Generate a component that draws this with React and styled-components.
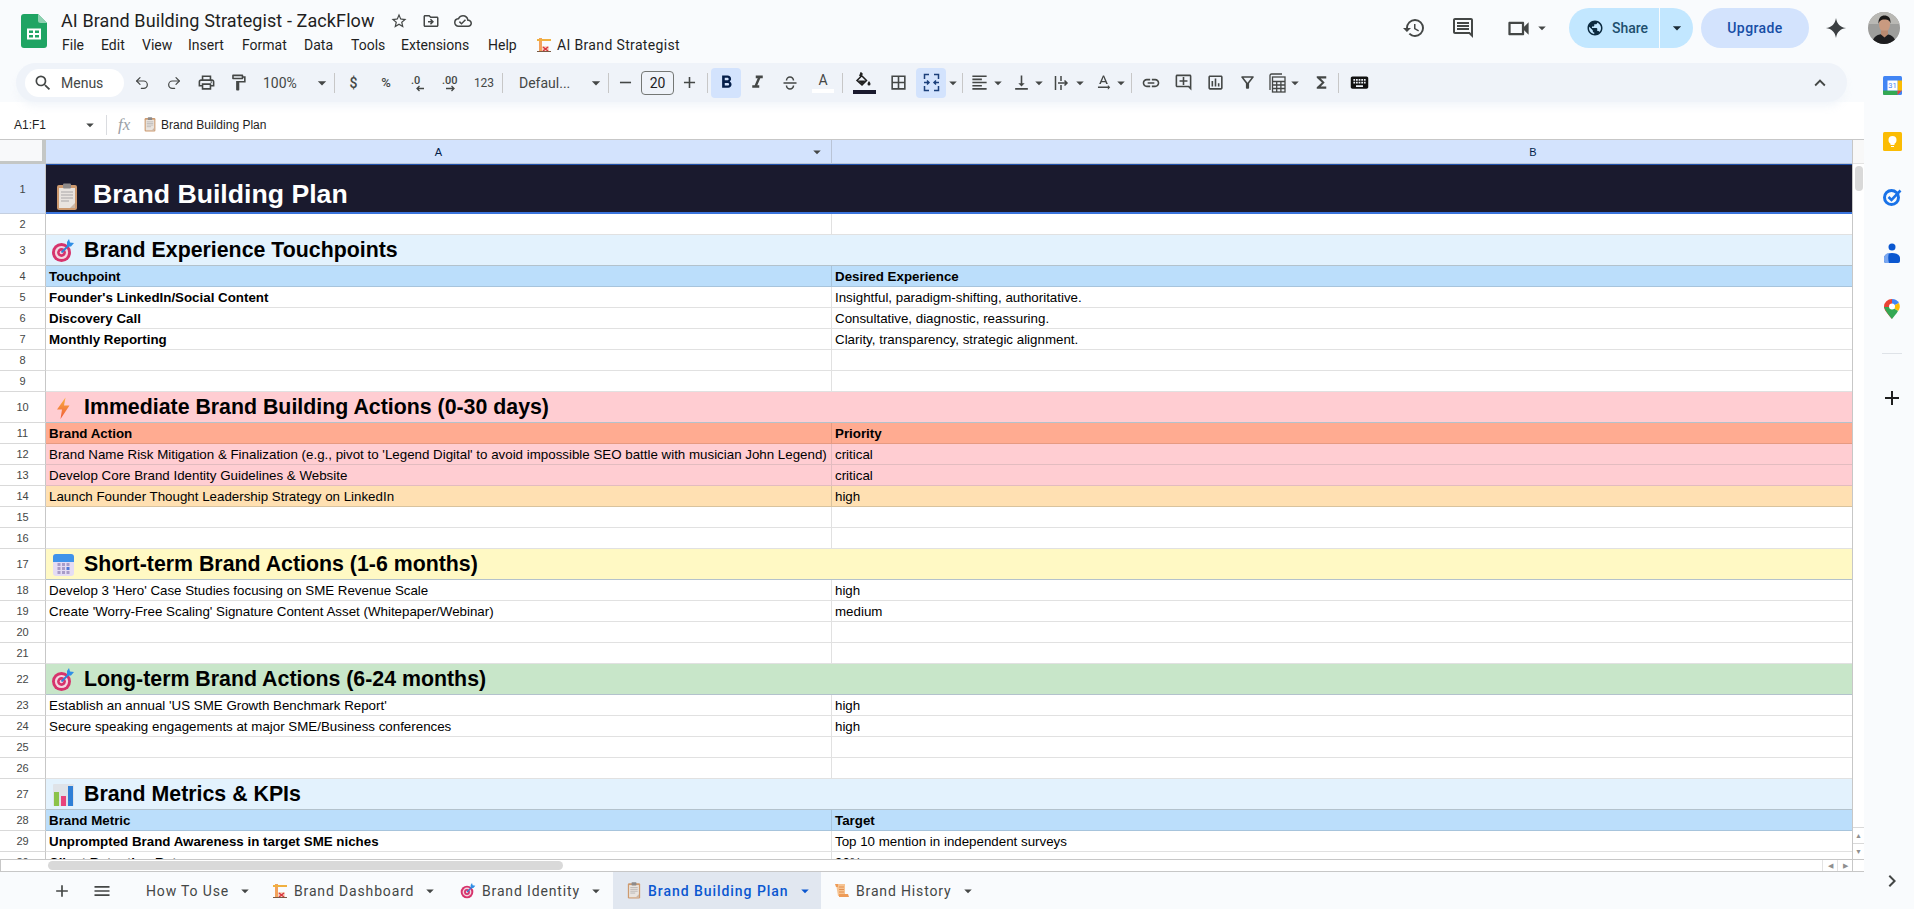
import React from "react";
import styled, { createGlobalStyle } from "styled-components";
import { Redo2, Undo2 } from "lucide-react";
import {
  MdAdd,
  MdArrowDropDown,
  MdChevronRight,
  MdFormatAlignLeft,
  MdFormatBold,
  MdFormatItalic,
  MdFunctions,
  MdHistory,
  MdKeyboard,
  MdKeyboardArrowUp,
  MdLink,
  MdMenu,
  MdOutlineAddComment,
  MdOutlineBorderAll,
  MdOutlineCloudDone,
  MdOutlineComment,
  MdOutlineDriveFileMove,
  MdOutlineFilterAlt,
  MdOutlineFormatPaint,
  MdOutlineInsertChart,
  MdOutlineLocalPrintshop,
  MdOutlineStarBorder,
  MdOutlineVideocam,
  MdPublic,
  MdRemove,
  MdSearch,
  MdTextRotationNone,
  MdVerticalAlignBottom,
} from "react-icons/md";

const GlobalStyle = createGlobalStyle`
  html, body {
    margin: 0;
    padding: 0;
    height: 100%;
    overflow: hidden;
    background: #f9fbfd;
  }
  * {
    box-sizing: border-box;
  }
`;

const UI_FONT = `"Open Sans", Roboto, "Liberation Sans", sans-serif`;
const CELL_FONT = `"Liberation Sans", Arial, sans-serif`;

const Page = styled.div`
  width: 1914px;
  height: 909px;
  display: flex;
  flex-direction: column;
  background: #f9fbfd;
  color: #1f1f1f;
  font-family: ${UI_FONT};
  overflow: hidden;
`;

/* ---------- top bar ---------- */

const TopBar = styled.header`
  height: 63px;
  flex: none;
  display: flex;
  align-items: flex-start;
  padding-left: 21px;
`;

const LogoSlot = styled.div`
  width: 26px;
  height: 34px;
  margin-top: 14px;
  margin-right: 14px;
`;

const TitleBlock = styled.div`
  display: flex;
  flex-direction: column;
  padding-top: 9px;
`;

const TitleRow = styled.div`
  display: flex;
  align-items: center;
  height: 24px;
`;

const DocTitle = styled.div`
  font-family: Roboto, sans-serif;
  font-size: 18px;
  line-height: 24px;
  color: #1f1f1f;
  width: 322px;
  white-space: nowrap;
  letter-spacing: 0.1px;
`;

const TitleIcon = styled.span`
  width: 32px;
  display: flex;
  justify-content: center;
  color: #444746;
  font-size: 18px;
`;

const MenuRow = styled.nav`
  display: flex;
  align-items: center;
  height: 24px;
  margin-left: 1px;
`;

const MenuItem = styled.span`
  font-family: Roboto, sans-serif;
  font-size: 14px;
  color: #1f1f1f;
  width: ${(p) => p.$w}px;
  white-space: nowrap;
`;

const AddonName = styled.span`
  font-family: Roboto, sans-serif;
  font-size: 14px;
  letter-spacing: 0.35px;
  color: #1f1f1f;
  margin-left: 5px;
  white-space: nowrap;
`;

const TopRight = styled.div`
  margin-left: auto;
  display: flex;
  align-items: center;
  height: 56px;
  padding-right: 14px;
`;

const TopIcon = styled.span`
  width: ${(p) => p.$w}px;
  margin-left: ${(p) => p.$ml || 0}px;
  flex: none;
  display: flex;
  align-items: center;
  justify-content: center;
  color: #444746;
  font-size: ${(p) => p.$size || 24}px;
`;

const SharePill = styled.div`
  display: flex;
  height: 40px;
  border-radius: 20px;
  overflow: hidden;
  background: #c2e7ff;
  margin-left: 18px;
`;

const ShareMain = styled.div`
  width: 91px;
  padding-left: 17px;
  display: flex;
  align-items: center;
  gap: 8px;
  font-size: 14px;
  font-weight: 500;
  font-family: Roboto, sans-serif;
  color: #1d4f6e;
  border-right: 1px solid #f9fbfd;

  svg {
    color: #0c2b40;
    font-size: 18px;
  }
`;

const ShareCaret = styled.div`
  width: 33px;
  display: flex;
  align-items: center;
  justify-content: center;
  color: #1b2b36;
  font-size: 20px;
`;

const UpgradePill = styled.div`
  width: 108px;
  height: 40px;
  margin-left: 8px;
  border-radius: 20px;
  background: #d3e3fd;
  color: #174ea6;
  display: flex;
  align-items: center;
  justify-content: center;
  font-family: Roboto, sans-serif;
  font-size: 14px;
  font-weight: 500;
  letter-spacing: 0.4px;
`;

const GeminiSlot = styled.span`
  width: 59px;
  padding-right: 5px;
  display: flex;
  justify-content: center;
`;

const AvatarSlot = styled.span`
  width: 32px;
  height: 32px;
  border-radius: 50%;
  overflow: hidden;
  display: block;
`;

/* ---------- main area ---------- */

const Body = styled.div`
  flex: 1;
  min-height: 0;
  display: flex;
`;

const Workspace = styled.div`
  width: 1864px;
  display: flex;
  flex-direction: column;
  min-height: 0;
`;

const SidePanel = styled.aside`
  width: 50px;
  display: flex;
  flex-direction: column;
  align-items: center;
  padding: 10px 0 16px 6px;
  background: #f9fbfd;
`;

const SideIcon = styled.span`
  width: 24px;
  height: 24px;
  margin-bottom: 32px;
  display: flex;
  align-items: center;
  justify-content: center;
`;

const SideRule = styled.div`
  width: 20px;
  height: 1px;
  background: #dfe3e8;
  margin: 0 0 32px;
`;

const SidePlus = styled.span`
  font-size: 24px;
  color: #1f1f1f;
  display: flex;
`;

const SideChevron = styled.span`
  margin-top: auto;
  font-size: 24px;
  color: #444746;
  display: flex;
`;

/* ---------- toolbar ---------- */

const ToolbarOuter = styled.div`
  position: relative;
  z-index: 1;
  height: 39px;
  flex: none;
  margin: 0 17px 0 16px;
  padding-left: 9px;
  padding-right: 11px;
  display: flex;
  align-items: center;
  border-radius: 20px;
  background: #eff3f9;
  box-shadow: 0 6px 8px -2px rgba(240, 244, 249, 0.9);
`;

const SearchPill = styled.div`
  width: 99px;
  height: 28px;
  border-radius: 14px;
  background: #fff;
  display: flex;
  align-items: center;
  padding-left: 8px;
  gap: 8px;
  margin-right: 2px;
  color: #444746;
  font-family: Roboto, sans-serif;
  font-size: 14px;

  svg {
    font-size: 20px;
    flex: none;
  }
`;

const ToolButton = styled.span`
  width: ${(p) => p.$w || 32}px;
  height: 30px;
  margin-left: ${(p) => p.$ml || 0}px;
  flex: none;
  display: flex;
  align-items: center;
  justify-content: center;
  border-radius: 4px;
  background: ${(p) => (p.$active ? "#d3e3fd" : "transparent")};
  color: ${(p) => p.$color || (p.$active ? "#041e49" : "#444746")};
  font-size: ${(p) => p.$size || 19}px;
  font-family: Roboto, sans-serif;
`;

const ToolText = styled.span`
  font-size: ${(p) => p.$size || 13}px;
  font-weight: ${(p) => p.$weight || 400};
  color: #444746;
`;

const Caret = styled.span`
  width: ${(p) => p.$w || 8}px;
  flex: none;
  display: flex;
  justify-content: center;
  color: #444746;
  font-size: 18px;

  svg {
    flex: none;
  }
`;

const Sep = styled.span`
  width: 1px;
  height: 20px;
  flex: none;
  background: #c7c7c7;
  margin: 0 2px 0 ${(p) => p.$ml || 2}px;
`;

const ToolSelect = styled.span`
  width: ${(p) => p.$w}px;
  padding-left: ${(p) => p.$pad}px;
  flex: none;
  display: flex;
  align-items: center;
  justify-content: space-between;
  font-family: Roboto, sans-serif;
  font-size: 14px;
  color: #444746;

  svg {
    font-size: 20px;
  }
`;

const SizeBox = styled.span`
  width: 33px;
  height: 24px;
  margin-left: 2px;
  flex: none;
  border: 1px solid #747775;
  border-radius: 4px;
  display: flex;
  align-items: center;
  justify-content: center;
  font-family: Roboto, sans-serif;
  font-size: 14px;
  color: #1f1f1f;
`;

const ColorGlyph = styled.span`
  display: flex;
  flex-direction: column;
  align-items: center;
  font-size: 14px;
  line-height: 14px;
  color: #444746;
`;

const ColorBar = styled.span`
  width: ${(p) => p.$w}px;
  height: 4px;
  background: ${(p) => p.$color};
  margin-top: 2px;
`;

const ToolbarEnd = styled(ToolButton)`
  margin-left: auto;
`;

/* ---------- formula bar ---------- */

const FormulaBar = styled.div`
  height: 37px;
  flex: none;
  padding-top: 9px;
  display: flex;
  align-items: center;
  background: #fff;
  font-family: ${CELL_FONT};
  font-size: 12px;
  color: #1f1f1f;
`;

const NameBox = styled.div`
  width: 106px;
  padding: 0 7px 0 14px;
  display: flex;
  align-items: center;
  justify-content: space-between;

  svg {
    font-size: 18px;
    color: #444746;
  }
`;

const FormulaSep = styled.div`
  width: 1px;
  height: 20px;
  background: #dadce0;
`;

const FxMark = styled.span`
  font-family: "Liberation Serif", serif;
  font-style: italic;
  font-size: 17px;
  color: #9aa0a6;
  margin: 0 10px 0 11px;
  width: 15px;
`;

const FormulaValue = styled.span`
  display: flex;
  align-items: center;
  gap: 4px;
`;

/* ---------- grid ---------- */

const SheetArea = styled.div`
  flex: 1;
  min-height: 0;
  display: flex;
  background: #fff;
  border-top: 1px solid #c7c7c7;
`;

const SheetMain = styled.div`
  width: 1852px;
  display: flex;
  flex-direction: column;
  min-height: 0;
  overflow: hidden;
`;

const ColumnHeader = styled.div`
  display: flex;
  height: 24px;
  flex: none;
`;

const CornerCell = styled.div`
  width: 46px;
  flex: none;
  background: #f8f9fa;
  border-right: 4px solid #c4c7c5;
  border-bottom: 3px solid #c4c7c5;
`;

const ColumnCell = styled.div`
  position: relative;
  width: ${(p) => p.$w}px;
  flex: none;
  background: #d3e3fd;
  border-right: 1px solid #b9c4d6;
  border-bottom: 1px solid #b9c4d6;
  display: flex;
  align-items: center;
  justify-content: center;
  font-family: ${CELL_FONT};
  font-size: 11px;
  color: #041e49;
`;

const ColumnMenu = styled.span`
  position: absolute;
  right: 5px;
  top: 3px;
  font-size: 18px;
  color: #444746;
  display: flex;
`;

const GridViewport = styled.div`
  flex: 1;
  min-height: 0;
  overflow: hidden;
`;

const Row = styled.div`
  display: flex;
  height: ${(p) => p.$h}px;
`;

const RowNumber = styled.div`
  width: 46px;
  flex: none;
  display: flex;
  align-items: center;
  justify-content: center;
  background: ${(p) => (p.$selected ? "#d3e3fd" : "#fff")};
  border-right: 1px solid #c7c7c7;
  border-bottom: 1px solid ${(p) => (p.$selected ? "#c4cfe0" : "#d9d9d9")};
  font-family: ${CELL_FONT};
  font-size: 11px;
  color: #444746;
`;

const Cell = styled.div`
  width: ${(p) => p.$w}px;
  flex: none;
  padding: 0 3px;
  display: flex;
  align-items: flex-end;
  background: ${(p) => p.$bg || "#fff"};
  border-right: 1px solid ${(p) => p.$line || "#e1e1e1"};
  border-bottom: 1px solid ${(p) => p.$line || "#e1e1e1"};
  font-family: ${CELL_FONT};
  font-size: 13.33px;
  line-height: 18px;
  font-weight: ${(p) => (p.$bold ? 700 : 400)};
  color: #000;
  white-space: nowrap;
  overflow: hidden;
`;

const SectionCell = styled.div`
  flex: 1;
  display: flex;
  align-items: center;
  gap: 9px;
  padding: 1px 0 0 5px;
  background: ${(p) => p.$bg};
  border-bottom: 1px solid #b3c2cc;
  font-family: ${CELL_FONT};
  font-size: 21.33px;
  font-weight: 700;
  color: #000;
  white-space: nowrap;
`;

const TitleCell = styled.div`
  flex: 1;
  display: flex;
  align-items: flex-end;
  gap: 13px;
  padding: 0 0 1px 8px;
  background: #1a1a2e;
  border-top: 1px solid #1d4fa8;
  border-bottom: 2px solid #3a74dc;
  font-family: ${CELL_FONT};
  font-size: 26.67px;
  line-height: 34px;
  font-weight: 700;
  color: #fff;
  white-space: nowrap;
`;

const HScrollBar = styled.div`
  height: 13px;
  flex: none;
  display: flex;
  align-items: center;
  background: #fff;
  border-top: 1px solid #c7c7c7;
  border-bottom: 1px solid #c7c7c7;
  padding-left: 46px;
  box-shadow: inset 46px 0 0 -45px #c7c7c7;
`;

const HThumb = styled.div`
  width: 515px;
  height: 9px;
  margin-left: 2px;
  border-radius: 5px;
  background: #d9d9d9;
`;

const ScrollArrows = styled.div`
  margin-left: auto;
  display: flex;
  height: 100%;
`;

const ScrollArrow = styled.span`
  width: 15px;
  display: flex;
  align-items: center;
  justify-content: center;
  border-left: 1px solid #e3e3e3;
  color: #8f8f8f;
  font-size: 7px;
  line-height: 1;
`;

const VScroll = styled.div`
  width: 12px;
  flex: none;
  display: flex;
  flex-direction: column;
  background: #fff;
  border-left: 1px solid #c7c7c7;
`;

const VScrollHead = styled.div`
  height: 24px;
  flex: none;
  background: #f8f8f8;
  border-bottom: 1px solid #e3e3e3;
`;

const VThumbTrack = styled.div`
  flex: 1;
  padding: 2px 1px 0 2px;
`;

const VThumb = styled.div`
  height: 25px;
  border-radius: 4px;
  background: #d9d9d9;
`;

const VArrow = styled.span`
  height: 16px;
  flex: none;
  display: flex;
  align-items: center;
  justify-content: center;
  border-top: 1px solid #d9d9d9;
  color: #8f8f8f;
  font-size: 7px;
  line-height: 1;
`;

const VFoot = styled.div`
  height: 13px;
  flex: none;
  border-top: 1px solid #c7c7c7;
  border-bottom: 1px solid #c7c7c7;
`;

/* ---------- sheet tabs ---------- */

const TabBar = styled.div`
  height: 37px;
  flex: none;
  display: flex;
  align-items: stretch;
  padding-left: 42px;
  background: #f9fbfd;
  font-family: Roboto, sans-serif;
  font-size: 14px;
  color: #444746;
`;

const TabTool = styled.span`
  width: 40px;
  display: flex;
  align-items: center;
  justify-content: center;
  font-size: 20px;
  color: #444746;
`;

const SheetTab = styled.div`
  width: ${(p) => p.$w}px;
  padding-left: ${(p) => p.$pad}px;
  display: flex;
  align-items: center;
  gap: 6px;
  background: ${(p) => (p.$active ? "#e1e7f0" : "transparent")};
  color: ${(p) => (p.$active ? "#0b57d0" : "#444746")};
  font-weight: ${(p) => (p.$active ? 500 : 400)};
  letter-spacing: ${(p) => (p.$active ? 0.95 : 0.85)}px;
  white-space: nowrap;

  svg {
    flex: none;
  }

  svg.caret {
    font-size: 18px;
    margin-left: 1px;
    color: ${(p) => (p.$active ? "#0b57d0" : "#444746")};
  }
`;

/* ---------- drawings ---------- */

const SheetsLogo = () => (
  <svg width="26" height="34" viewBox="0 0 26 34">
    <path d="M3 0h14l9 9v22a3 3 0 0 1-3 3H3a3 3 0 0 1-3-3V3a3 3 0 0 1 3-3z" fill="#1fa463" />
    <path d="M17 0l9 9h-6.5A2.5 2.5 0 0 1 17 6.5z" fill="#8ed1b1" />
    <path d="M6 14.5h14v11H6z" fill="#fff" />
    <path d="M8 16.5h4v2.5H8zM14 16.5h4v2.5h-4zM8 21h4v2.5H8zM14 21h4v2.5h-4z" fill="#1fa463" />
  </svg>
);

const ClipboardGlyph = ({ size = 26 }) => (
  <svg width={size} height={(size * 28) / 26} viewBox="0 0 26 28">
    <rect x="3" y="2" width="20" height="25" rx="2" fill="#cd9a6f" />
    <rect x="5" y="5" width="16" height="20" fill="#e9e4df" />
    <path d="M21 25v-5l-5 5z" fill="#c9b7a8" />
    <rect x="9" y="0.5" width="8" height="5" rx="1" fill="#8d8a8a" />
    <path d="M7 9h12M7 12h12M7 15h12M7 18h8" stroke="#a9a6a8" strokeWidth="1.1" />
  </svg>
);

const TargetGlyph = ({ size = 24 }) => (
  <svg width={size} height={size} viewBox="0 0 24 24">
    <circle cx="10.5" cy="13.5" r="9.5" fill="#d6336c" />
    <circle cx="10.5" cy="13.5" r="6.6" fill="#f3d6e0" />
    <circle cx="10.5" cy="13.5" r="4.4" fill="#d6336c" />
    <circle cx="10.5" cy="13.5" r="1.8" fill="#f3d6e0" />
    <path d="M10.5 13.5L19 5" stroke="#2f7fd6" strokeWidth="1.8" />
    <path d="M16 3l2-3 1 3.5L23 4l-3 3.5-4 .2z" fill="#2f8fe6" />
  </svg>
);

const ZapGlyph = ({ size = 24 }) => (
  <svg width={size} height={size} viewBox="0 0 24 24">
    <defs>
      <linearGradient id="zapFill" x1="0" y1="0" x2="0" y2="1">
        <stop offset="0" stopColor="#f9b13c" />
        <stop offset="1" stopColor="#ef5a3c" />
      </linearGradient>
    </defs>
    <path d="M14.5 1.5L6 13.5h5L9.5 23l9-13.5h-5.5z" fill="url(#zapFill)" />
  </svg>
);

const CalendarGlyph = ({ size = 24 }) => (
  <svg width={size} height={size} viewBox="0 0 24 24">
    <rect x="2" y="1" width="21" height="22" rx="3" fill="#e4dcf4" />
    <path d="M2 9V4a3 3 0 0 1 3-3h15a3 3 0 0 1 3 3v5z" fill="#3f93ea" />
    {[10, 14, 18].flatMap((y) =>
      [6.5, 11, 15.5].map((x) => (
        <rect
          key={`${x}-${y}`}
          x={x}
          y={y}
          width="3"
          height="3"
          fill={x === 15.5 && y === 14 ? "#4f79d8" : "#a89cc8"}
        />
      ))
    )}
  </svg>
);

const ChartGlyph = ({ size = 24 }) => (
  <svg width={size} height={size} viewBox="0 0 24 24">
    <rect x="2" y="1" width="21" height="22" rx="1" fill="#dfe3e8" />
    <rect x="3" y="9" width="5" height="14" fill="#8bc34a" />
    <rect x="10" y="13" width="5" height="10" fill="#e8437b" />
    <rect x="17" y="3" width="5" height="20" fill="#2f7fd6" />
  </svg>
);

const ScrollGlyph = ({ size = 16 }) => (
  <svg width={size} height={size} viewBox="0 0 16 16">
    <path d="M2 1h9v12H4z" fill="#f6c391" />
    <path d="M1 1h3v3H2zM5 14h10l-1-3H5z" fill="#ee9b57" />
    <path d="M5 4h5M5 6.5h5M5 9h5" stroke="#e08a4a" strokeWidth="0.9" />
  </svg>
);

const CraneGlyph = ({ size = 16 }) => (
  <svg width={size} height={size} viewBox="0 0 16 16">
    <path d="M3 1h3v14H3z" fill="#f2a25c" />
    <path d="M1 2h14v2H1z" fill="#f0b040" />
    <path d="M6 9h7v6H6z" fill="#f7d9c6" />
    <path d="M7 10l5 4M12 10l-5 4" stroke="#d9363e" strokeWidth="1.6" />
    <path d="M1 14.5h14" stroke="#7a5a44" strokeWidth="1" />
  </svg>
);

const GeminiSpark = () => (
  <svg width="22" height="22" viewBox="0 0 24 24">
    <path d="M12 1c1 6.5 4.5 10 11 11-6.5 1-10 4.5-11 11-1-6.5-4.5-10-11-11 6.5-1 10-4.5 11-11z" fill="#3c4043" />
  </svg>
);

const AvatarArt = () => (
  <svg width="32" height="32" viewBox="0 0 32 32">
    <rect width="32" height="32" fill="#9d9d9b" />
    <rect width="32" height="12" fill="#b9b8b4" />
    <path d="M4 32c1-8 6-10 12-10s11 2 12 10z" fill="#1d1d1f" />
    <path d="M11 12c0-5 2.5-7 5.5-7S22 7 22 12c0 4.5-2.5 8-5.5 8S11 16.5 11 12z" fill="#c99a80" />
    <path d="M10.5 12c-.5-6 2.5-8.5 6-8.5s6.5 2 6 8c-1-3-2-4-6-4s-5 1.5-6 4.5z" fill="#1c1a19" />
    <path d="M13 22.5l3.5 3 3.5-3v-4h-7z" fill="#b98a70" />
  </svg>
);

const CalendarApp = () => (
  <svg width="19" height="19" viewBox="0 0 19 19">
    <rect width="19" height="19" rx="1.5" fill="#4285f4" />
    <path d="M0 14.5h14.5V19H1.5A1.5 1.5 0 0 1 0 17.5z" fill="#34a853" />
    <path d="M14.5 14.5H19L14.5 19z" fill="#ea4335" />
    <path d="M14.5 4.5H19v10h-4.5z" fill="#fbbc04" />
    <path d="M4.5 4.5h10v10h-10z" fill="#fff" />
    <text x="9.5" y="12.3" textAnchor="middle" fontSize="7.5" fontFamily="Roboto, sans-serif" fill="#4285f4">31</text>
  </svg>
);

const KeepApp = () => (
  <svg width="19" height="19" viewBox="0 0 19 19">
    <rect width="19" height="19" rx="1.5" fill="#fbbc04" />
    <circle cx="9.5" cy="8" r="4" fill="#fff" />
    <path d="M7.5 11h4v2h-4zM8 14h3v1H8z" fill="#fff" />
  </svg>
);

const TasksApp = () => (
  <svg width="20" height="20" viewBox="0 0 20 20">
    <circle cx="9.5" cy="10.5" r="7" fill="none" stroke="#1a73e8" strokeWidth="3" />
    <path d="M6.5 10l3 3 9-9.5" fill="none" stroke="#1a73e8" strokeWidth="2.6" />
  </svg>
);

const ContactsApp = () => (
  <svg width="16" height="20" viewBox="0 0 16 20">
    <circle cx="8" cy="4" r="3.5" fill="#0b57d0" />
    <path d="M0 18v-3c0-3 3.5-5 8-5s8 2 8 5v3a2 2 0 0 1-2 2H2a2 2 0 0 1-2-2z" fill="#0b57d0" />
    <path d="M0 14.5C.5 12 3 10 5 10c-1 3-1 7 0 10H2a2 2 0 0 1-2-2z" fill="#7aa7f0" />
  </svg>
);

const MapsApp = () => (
  <svg width="16" height="20" viewBox="0 0 16 20">
    <path d="M8 20C3 14 0 11 0 7.5A8 7.5 0 0 1 8 0z" fill="#ea4335" />
    <path d="M8 0a8 7.5 0 0 1 7 4l-7 3.5z" fill="#4285f4" />
    <path d="M15 4c1.3 3 1 5.5-1 8L8 7.5z" fill="#fbbc04" />
    <path d="M0 8l8 0 6 4c-1.5 2.5-3.5 5-6 8-3.5-4-6.5-8-8-12z" fill="#34a853" />
    <circle cx="8" cy="7.5" r="3" fill="#fff" />
  </svg>
);

const DecimalDown = () => (
  <svg width="20" height="20" viewBox="0 0 20 20">
    <text x="3" y="11" fontSize="11" fontFamily="Roboto, sans-serif" fontWeight="500" fill="#444746">.0</text>
    <path d="M16 15.5H9M11.5 13l-2.5 2.5 2.5 2.5" fill="none" stroke="#444746" strokeWidth="1.3" />
  </svg>
);

const DecimalUp = () => (
  <svg width="22" height="20" viewBox="0 0 22 20">
    <text x="2" y="11" fontSize="11" fontFamily="Roboto, sans-serif" fontWeight="500" fill="#444746">.00</text>
    <path d="M6 15.5h8M11.5 13l2.5 2.5-2.5 2.5" fill="none" stroke="#444746" strokeWidth="1.3" />
  </svg>
);

const StrikeGlyph = () => (
  <svg width="18" height="18" viewBox="0 0 18 18" fill="none" stroke="#444746" strokeWidth="1.5">
    <path d="M5.5 6.5a3.5 3.5 0 0 1 7 0M2.500 9h13M5.500 11.500a3.500 3.500 0 0 0 7 0" />
  </svg>
);

const FillGlyph = () => (
  <ColorGlyph>
    <svg width="18" height="16" viewBox="0 0 18 16">
      <path d="M6 1l1 1-1 1 5.5 5.5L7 13 2 8.500 6 4.500 5 3.500z" fill="none" stroke="#1f1f1f" strokeWidth="1.5" />
      <path d="M3 8.5h8L7 12.500z" fill="#1f1f1f" />
      <path d="M14 9c1 1.500 1.500 2.300 1.500 3a1.500 1.500 0 0 1-3 0c0-.7.5-1.500 1.500-3z" fill="#1f1f1f" />
    </svg>
    <ColorBar $w={23} $color="#1a1a2e" />
  </ColorGlyph>
);

const MergeGlyph = () => (
  <svg width="17" height="19" viewBox="0 0 17 19" fill="none" stroke="#1b3f7a" strokeWidth="1.5">
    <path d="M6 1.5H1.5V6M11 1.5h4.5V6M6 17.5H1.5V13M11 17.5h4.5V13" />
    <path d="M1 9.5h5M4 7.5l2 2-2 2M16 9.5h-5M13 7.5l-2 2 2 2" />
  </svg>
);

const WrapGlyph = () => (
  <svg width="18" height="18" viewBox="0 0 18 18" fill="none" stroke="#444746" strokeWidth="1.5">
    <path d="M2.5 2v14M8 2v5M8 11v5M5 9h9M11.5 6.5L14 9l-2.500 2.500" />
  </svg>
);

const TableStackGlyph = () => (
  <svg width="17" height="20" viewBox="0 0 17 20" fill="none" stroke="#444746" strokeWidth="1.3">
    <path d="M1 17V2.5A1.5 1.5 0 0 1 2.5 1H13" />
    <rect x="3.5" y="4" width="12.5" height="15" />
    <path d="M3.5 8.5H16M3.5 12H16M3.5 15.5H16M7.7 8.5V19M11.9 8.5V19" />
  </svg>
);

/* ---------- data ---------- */

const rows = [
  { n: 1, type: "title", text: "Brand Building Plan" },
  { n: 2 },
  { n: 3, type: "section", text: "Brand Experience Touchpoints", bg: "#e3f2fd", icon: "target" },
  { n: 4, a: "Touchpoint", b: "Desired Experience", bg: "#bbdefb", head: true, line: "#a7c4dc" },
  { n: 5, a: "Founder's LinkedIn/Social Content", b: "Insightful, paradigm-shifting, authoritative.", boldA: true },
  { n: 6, a: "Discovery Call", b: "Consultative, diagnostic, reassuring.", boldA: true },
  { n: 7, a: "Monthly Reporting", b: "Clarity, transparency, strategic alignment.", boldA: true },
  { n: 8 },
  { n: 9 },
  { n: 10, type: "section", text: "Immediate Brand Building Actions (0-30 days)", bg: "#ffcdd2", icon: "zap" },
  { n: 11, a: "Brand Action", b: "Priority", bg: "#ffab91", head: true, line: "#e69a82" },
  {
    n: 12,
    a: "Brand Name Risk Mitigation & Finalization (e.g., pivot to 'Legend Digital' to avoid impossible SEO battle with musician John Legend)",
    b: "critical",
    bg: "#ffcdd2",
    line: "#e3bcc0",
  },
  { n: 13, a: "Develop Core Brand Identity Guidelines & Website", b: "critical", bg: "#ffcdd2", line: "#e3bcc0" },
  { n: 14, a: "Launch Founder Thought Leadership Strategy on LinkedIn", b: "high", bg: "#ffe0b2", line: "#d9c39e" },
  { n: 15 },
  { n: 16 },
  { n: 17, type: "section", text: "Short-term Brand Actions (1-6 months)", bg: "#fff9c4", icon: "calendar" },
  { n: 18, a: "Develop 3 'Hero' Case Studies focusing on SME Revenue Scale", b: "high" },
  { n: 19, a: "Create 'Worry-Free Scaling' Signature Content Asset (Whitepaper/Webinar)", b: "medium" },
  { n: 20 },
  { n: 21 },
  { n: 22, type: "section", text: "Long-term Brand Actions (6-24 months)", bg: "#c8e6c9", icon: "target" },
  { n: 23, a: "Establish an annual 'US SME Growth Benchmark Report'", b: "high" },
  { n: 24, a: "Secure speaking engagements at major SME/Business conferences", b: "high" },
  { n: 25 },
  { n: 26 },
  { n: 27, type: "section", text: "Brand Metrics & KPIs", bg: "#e3f2fd", icon: "chart" },
  { n: 28, a: "Brand Metric", b: "Target", bg: "#bbdefb", head: true, line: "#a7c4dc" },
  { n: 29, a: "Unprompted Brand Awareness in target SME niches", b: "Top 10 mention in independent surveys", boldA: true },
  { n: 30, a: "Client Retention Rate", b: "90%", boldA: true },
];

const sectionIcons = {
  target: <TargetGlyph />,
  zap: <ZapGlyph />,
  calendar: <CalendarGlyph />,
  chart: <ChartGlyph />,
};

const menus = [
  ["File", 39],
  ["Edit", 41],
  ["View", 46],
  ["Insert", 54],
  ["Format", 62],
  ["Data", 47],
  ["Tools", 50],
  ["Extensions", 87],
  ["Help", 48],
];

// column B runs on past the visible part of the sheet, its letter sits at its true centre
const COL_A = 786;
const COL_B = 1403;

const SheetRow = ({ row }) => {
  if (row.type === "title") {
    return (
      <Row $h={50}>
        <RowNumber $selected>{row.n}</RowNumber>
        <TitleCell>
          <ClipboardGlyph />
          {row.text}
        </TitleCell>
      </Row>
    );
  }
  if (row.type === "section") {
    return (
      <Row $h={31}>
        <RowNumber>{row.n}</RowNumber>
        <SectionCell $bg={row.bg}>
          {sectionIcons[row.icon]}
          {row.text}
        </SectionCell>
      </Row>
    );
  }
  return (
    <Row $h={21}>
      <RowNumber>{row.n}</RowNumber>
      <Cell $w={COL_A} $bg={row.bg} $bold={row.head || row.boldA} $line={row.line}>
        {row.a}
      </Cell>
      <Cell $w={COL_B} $bg={row.bg} $bold={row.head} $line={row.line}>
        {row.b}
      </Cell>
    </Row>
  );
};

const Toolbar = () => (
  <ToolbarOuter>
    <SearchPill>
      <MdSearch />
      Menus
    </SearchPill>
    <ToolButton><Undo2 size={16} strokeWidth={1.8} /></ToolButton>
    <ToolButton><Redo2 size={16} strokeWidth={1.8} /></ToolButton>
    <ToolButton><MdOutlineLocalPrintshop /></ToolButton>
    <ToolButton><MdOutlineFormatPaint /></ToolButton>
    <ToolSelect $w={78} $pad={9}>
      100%
      <MdArrowDropDown />
    </ToolSelect>
    <Sep />
    <ToolButton $w={33}><ToolText $size={14} $weight={500}>$</ToolText></ToolButton>
    <ToolButton><ToolText $size={13} $weight={500}>%</ToolText></ToolButton>
    <ToolButton><DecimalDown /></ToolButton>
    <ToolButton $w={34}><DecimalUp /></ToolButton>
    <ToolButton><ToolText $size={12}>123</ToolText></ToolButton>
    <Sep />
    <ToolSelect $w={101} $pad={14}>
      Defaul...
      <MdArrowDropDown />
    </ToolSelect>
    <Sep />
    <ToolButton $w={28}><MdRemove /></ToolButton>
    <SizeBox>20</SizeBox>
    <ToolButton $w={31}><MdAdd /></ToolButton>
    <Sep />
    <ToolButton $w={30} $ml={1} $active $size={21}><MdFormatBold /></ToolButton>
    <ToolButton $size={21}><MdFormatItalic /></ToolButton>
    <ToolButton $w={33}><StrikeGlyph /></ToolButton>
    <ToolButton $w={34}>
      <ColorGlyph>
        A
        <ColorBar $w={22} $color="#ffffff" />
      </ColorGlyph>
    </ToolButton>
    <Sep />
    <ToolButton $w={38}><FillGlyph /></ToolButton>
    <ToolButton $w={31}><MdOutlineBorderAll /></ToolButton>
    <ToolButton $w={30} $ml={2} $active><MergeGlyph /></ToolButton>
    <Caret $w={14}><MdArrowDropDown /></Caret>
    <Sep />
    <ToolButton $w={28}><MdFormatAlignLeft /></ToolButton>
    <Caret $w={10}><MdArrowDropDown /></Caret>
    <ToolButton $w={28} $ml={4}><MdVerticalAlignBottom /></ToolButton>
    <Caret><MdArrowDropDown /></Caret>
    <ToolButton $w={28} $ml={5}><WrapGlyph /></ToolButton>
    <Caret><MdArrowDropDown /></Caret>
    <ToolButton $w={28} $ml={5}><MdTextRotationNone /></ToolButton>
    <Caret><MdArrowDropDown /></Caret>
    <Sep $ml={6} />
    <ToolButton $ml={1} $size={20}><MdLink /></ToolButton>
    <ToolButton><MdOutlineAddComment /></ToolButton>
    <ToolButton><MdOutlineInsertChart /></ToolButton>
    <ToolButton><MdOutlineFilterAlt /></ToolButton>
    <ToolButton $w={28}><TableStackGlyph /></ToolButton>
    <Caret><MdArrowDropDown /></Caret>
    <ToolButton $ml={6}><MdFunctions /></ToolButton>
    <Sep $ml={1} />
    <ToolButton $ml={2} $color="#111" $size={21}><MdKeyboard /></ToolButton>
    <ToolbarEnd $size={22}><MdKeyboardArrowUp /></ToolbarEnd>
  </ToolbarOuter>
);

const App = () => (
  <Page>
    <GlobalStyle />
    <TopBar>
      <LogoSlot><SheetsLogo /></LogoSlot>
      <TitleBlock>
        <TitleRow>
          <DocTitle>AI Brand Building Strategist - ZackFlow</DocTitle>
          <TitleIcon><MdOutlineStarBorder /></TitleIcon>
          <TitleIcon><MdOutlineDriveFileMove /></TitleIcon>
          <TitleIcon><MdOutlineCloudDone /></TitleIcon>
        </TitleRow>
        <MenuRow>
          {menus.map(([label, w]) => (
            <MenuItem key={label} $w={w}>{label}</MenuItem>
          ))}
          <CraneGlyph />
          <AddonName>AI Brand Strategist</AddonName>
        </MenuRow>
      </TitleBlock>
      <TopRight>
        <TopIcon $w={32}><MdHistory /></TopIcon>
        <TopIcon $w={66}><MdOutlineComment /></TopIcon>
        <TopIcon $w={44} $size={27}><MdOutlineVideocam /></TopIcon>
        <TopIcon $w={18} $ml={-7}><MdArrowDropDown /></TopIcon>
        <SharePill>
          <ShareMain>
            <MdPublic />
            Share
          </ShareMain>
          <ShareCaret><MdArrowDropDown /></ShareCaret>
        </SharePill>
        <UpgradePill>Upgrade</UpgradePill>
        <GeminiSlot><GeminiSpark /></GeminiSlot>
        <AvatarSlot><AvatarArt /></AvatarSlot>
      </TopRight>
    </TopBar>
    <Body>
      <Workspace>
        <Toolbar />
        <FormulaBar>
          <NameBox>
            A1:F1
            <MdArrowDropDown />
          </NameBox>
          <FormulaSep />
          <FxMark>fx</FxMark>
          <FormulaValue>
            <ClipboardGlyph size={14} />
            <span>Brand Building Plan</span>
          </FormulaValue>
        </FormulaBar>
        <SheetArea>
          <SheetMain>
            <ColumnHeader>
              <CornerCell />
              <ColumnCell $w={COL_A}>
                A
                <ColumnMenu><MdArrowDropDown /></ColumnMenu>
              </ColumnCell>
              <ColumnCell $w={COL_B}>B</ColumnCell>
            </ColumnHeader>
            <GridViewport>
              {rows.map((row) => (
                <SheetRow key={row.n} row={row} />
              ))}
            </GridViewport>
            <HScrollBar>
              <HThumb />
              <ScrollArrows>
                <ScrollArrow>◀</ScrollArrow>
                <ScrollArrow>▶</ScrollArrow>
              </ScrollArrows>
            </HScrollBar>
          </SheetMain>
          <VScroll>
            <VScrollHead />
            <VThumbTrack><VThumb /></VThumbTrack>
            <VArrow>▲</VArrow>
            <VArrow>▼</VArrow>
            <VFoot />
          </VScroll>
        </SheetArea>
        <TabBar>
          <TabTool><MdAdd /></TabTool>
          <TabTool><MdMenu /></TabTool>
          <SheetTab $w={136} $pad={24}>
            How To Use
            <MdArrowDropDown className="caret" />
          </SheetTab>
          <SheetTab $w={188} $pad={14}>
            <CraneGlyph />
            Brand Dashboard
            <MdArrowDropDown className="caret" />
          </SheetTab>
          <SheetTab $w={167} $pad={14}>
            <TargetGlyph size={16} />
            Brand Identity
            <MdArrowDropDown className="caret" />
          </SheetTab>
          <SheetTab $w={208} $pad={13} $active>
            <ClipboardGlyph size={16} />
            Brand Building Plan
            <MdArrowDropDown className="caret" />
          </SheetTab>
          <SheetTab $w={170} $pad={13}>
            <ScrollGlyph />
            Brand History
            <MdArrowDropDown className="caret" />
          </SheetTab>
        </TabBar>
      </Workspace>
      <SidePanel>
        <SideIcon><CalendarApp /></SideIcon>
        <SideIcon><KeepApp /></SideIcon>
        <SideIcon><TasksApp /></SideIcon>
        <SideIcon><ContactsApp /></SideIcon>
        <SideIcon><MapsApp /></SideIcon>
        <SideRule />
        <SidePlus><MdAdd /></SidePlus>
        <SideChevron><MdChevronRight /></SideChevron>
      </SidePanel>
    </Body>
  </Page>
);

export default App;
